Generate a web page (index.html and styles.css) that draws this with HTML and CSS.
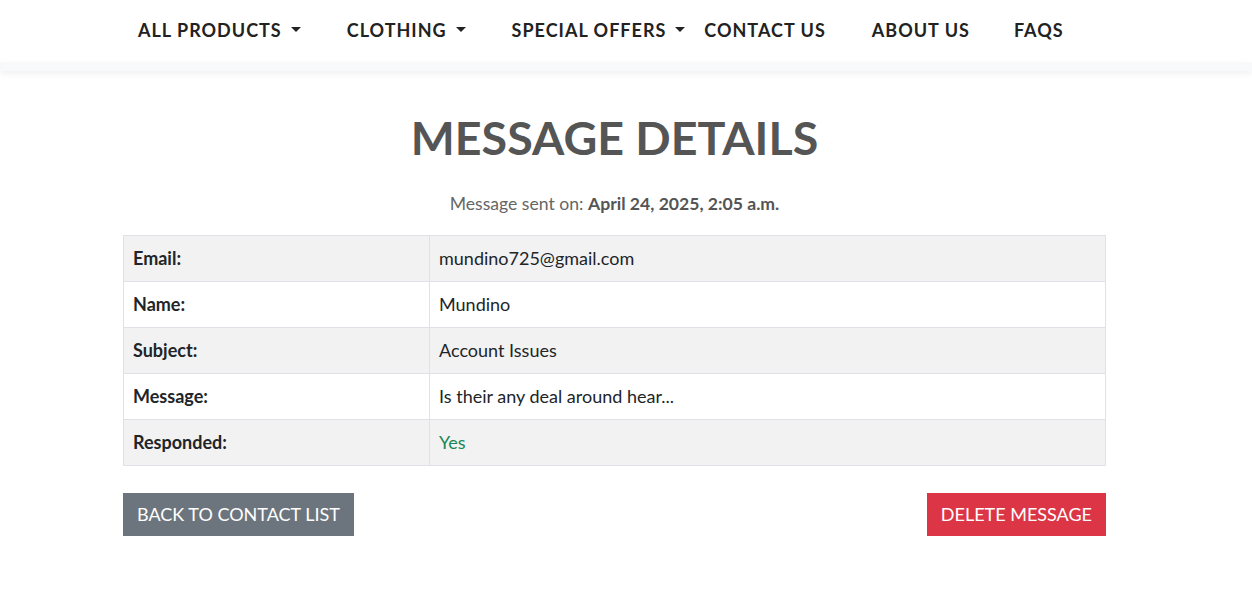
FILE: index.html
```html
<!DOCTYPE html>
<html>
<head>
<meta charset="utf-8">
<link rel="stylesheet" href="styles.css">
</head>
<body>
<header class="site-header">
  <nav class="main-nav">
    <a class="nav-item nav-all">ALL PRODUCTS<span class="caret"></span></a>
    <a class="nav-item nav-clothing">CLOTHING<span class="caret"></span></a>
    <a class="nav-item nav-offers">SPECIAL OFFERS<span class="caret"></span></a>
    <a class="nav-item nav-contact">CONTACT US</a>
    <a class="nav-item nav-about">ABOUT US</a>
    <a class="nav-item nav-faqs">FAQS</a>
  </nav>
  <div class="header-band"></div>
</header>
<main class="content">
  <h1 class="page-title">MESSAGE DETAILS</h1>
  <p class="sent-on">Message sent on: <strong>April 24, 2025, 2:05 a.m.</strong></p>
  <table class="details">
    <tr class="odd"><th>Email:</th><td>mundino725@gmail.com</td></tr>
    <tr><th>Name:</th><td>Mundino</td></tr>
    <tr class="odd"><th>Subject:</th><td>Account Issues</td></tr>
    <tr><th>Message:</th><td>Is their any deal around hear...</td></tr>
    <tr class="odd"><th>Responded:</th><td class="yes">Yes</td></tr>
  </table>
  <div class="actions">
    <a class="btn btn-back">BACK TO CONTACT LIST</a>
    <a class="btn btn-delete">DELETE MESSAGE</a>
  </div>
</main>
</body>
</html>
```
FILE: styles.css
```css
* { box-sizing: border-box; }
html, body { margin: 0; padding: 0; background: #fff; }
body { font-family: Lato, "Open Sans", sans-serif; color: #212529; }

.site-header { background: #fff; }
.main-nav {
  height: 62px;
  display: flex;
  align-items: center;
  padding-left: 138px;
  padding-bottom: 3px;
}
.nav-item {
  font-size: 18px;
  font-weight: 700;
  letter-spacing: 1px;
  color: #222;
  text-decoration: none;
  display: flex;
  align-items: center;
}
.caret {
  display: inline-block;
  width: 0; height: 0;
  border-left: 5px solid transparent;
  border-right: 5px solid transparent;
  border-top: 5px solid #222;
  margin-left: 9px;
}
.nav-all { margin-right: 46px; }
.nav-clothing { margin-right: 46px; }
.nav-offers { margin-right: 19px; }
.nav-contact { margin-right: 46px; }
.nav-about { margin-right: 44px; }

.header-band {
  height: 9px;
  background: #f8f9fa;
  box-shadow: 0 3px 6px rgba(0,0,0,0.06);
}

.content {
  width: 983px;
  margin-left: 123px;
  padding-top: 38px;
}
.page-title {
  margin: 0;
  text-align: center;
  font-size: 46.6px;
  font-weight: 700;
  color: #555;
  line-height: 56px;
}
.sent-on {
  margin: 27px 0 0;
  text-align: center;
  font-size: 17.6px;
  color: #666;
  line-height: 24px;
}
.sent-on strong { color: #555; }

.details {
  margin-top: 19px;
  width: 100%;
  border-collapse: collapse;
  font-size: 18px;
}
.details th, .details td {
  border: 1px solid #dee2e6;
  height: 46px;
  padding: 0 9px 1px;
  text-align: left;
  vertical-align: middle;
}
.details th { width: 306px; font-weight: 700; }
.details td { font-weight: 400; }
.details tr.odd { background: #f2f2f2; }
.details td.yes { color: #198754; }

.actions {
  margin-top: 27px;
  display: flex;
  justify-content: space-between;
}
.btn {
  display: inline-flex;
  align-items: center;
  height: 43px;
  padding: 0 14px 1px;
  font-size: 18px;
  color: #fff;
  text-decoration: none;
}
.btn-back { background: #6c757d; }
.btn-delete { background: #dc3545; }
```
